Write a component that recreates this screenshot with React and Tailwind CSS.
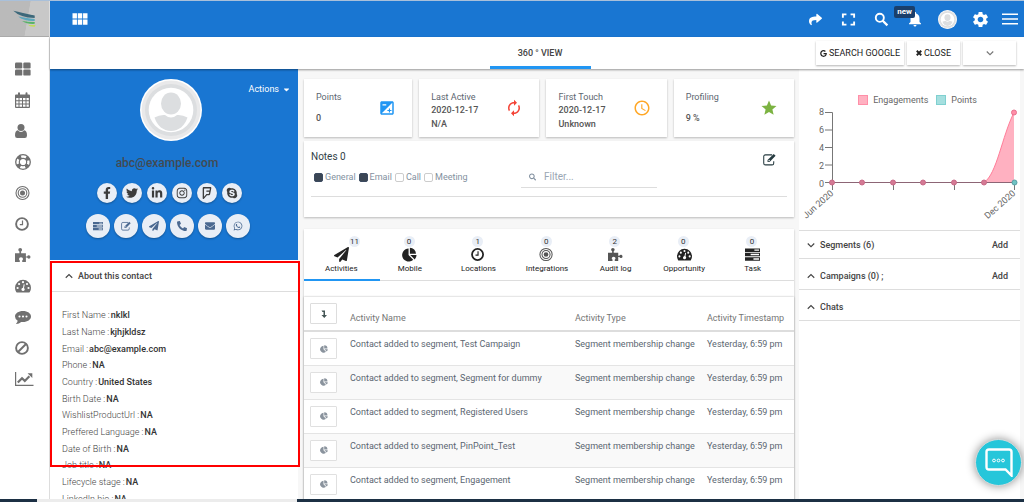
import React from "react";
import { FaFacebookF, FaTwitter, FaLinkedinIn, FaInstagram, FaFoursquare, FaSkype, FaWhatsapp, FaPaperPlane, FaPhoneAlt, FaEnvelope, FaShare, FaGoogle, FaSearch, FaCaretDown } from "react-icons/fa";
import { MdViewModule, MdNotifications, MdSettings, MdExposure, MdAutorenew, MdAccessTime, MdGrade } from "react-icons/md";

const Svg = ({ children, className = "size-4", box = "0 0 16 16" }) => (
  <svg viewBox={box} className={className} fill="currentColor" aria-hidden="true">{children}</svg>
);

const ThLarge = (p) => (
  <Svg {...p}>
    <rect x="0" y="1.5" width="7.3" height="6" rx="1.2" />
    <rect x="8.3" y="1.5" width="7.3" height="6" rx="1.2" />
    <rect x="0" y="8.6" width="7.3" height="6" rx="1.2" />
    <rect x="8.3" y="8.6" width="7.3" height="6" rx="1.2" />
  </Svg>
);
const Calendar = (p) => (
  <Svg {...p}>
    <path fillRule="evenodd" d="M1 2.5h2V1.3Q3 .2 4 .2t1 1.1v1.2h5.500V1.300Q10.500.2 11.500.2t1 1.100V2.500H14q1 0 1 1V15q0 1-1 1H1q-1 0-1-1V3.500q0-1 1-1zM1.200 6v2.300h2.300V6zm3.300 0v2.300h2.500V6zM8 6v2.300h2.500V6zm3.500 0v2.300h2.300V6zM1.200 9.200v2.400h2.300V9.200zm3.300 0v2.400h2.500V9.200zm3.500 0v2.400h2.500V9.200zm3.500 0v2.400h2.300V9.200zM1.200 12.500v2.300h2.300v-2.300zm3.300 0v2.300h2.500v-2.300zm3.500 0v2.300h2.500v-2.300zm3.500 0v2.300h2.300v-2.300z" />
  </Svg>
);
const Person = (p) => (
  <Svg {...p}>
    <circle cx="6" cy="4.600" r="3.500" />
    <path d="M2.800 7.300Q4 8.900 6 8.900t3.200-1.600Q12 7.800 12 12.500 12 15 9.800 15H2.200Q0 15 0 12.500 0 7.800 2.800 7.300z" />
  </Svg>
);
const LifeRing = (p) => (
  <Svg {...p}>
    <g fill="none" stroke="currentColor">
      <circle cx="8" cy="8" r="7.300" strokeWidth="1.300" />
      <circle cx="8" cy="8" r="3.700" strokeWidth="1.200" />
      <circle cx="8" cy="8" r="5.500" strokeWidth="3.800" strokeDasharray="3.600 5.040" strokeDashoffset="-2.520" />
    </g>
  </Svg>
);
const Bullseye = (p) => (
  <Svg {...p}>
    <g fill="none" stroke="currentColor" strokeWidth="1.100">
      <circle cx="7.500" cy="8" r="6.500" />
      <circle cx="7.500" cy="8" r="4.300" />
    </g>
    <circle cx="7.500" cy="8" r="2.500" />
  </Svg>
);
const Clock = (p) => (
  <Svg {...p}>
    <circle cx="7" cy="8" r="5.900" fill="none" stroke="currentColor" strokeWidth="1.900" />
    <path d="M7.500 4.500v4.200H4.800" fill="none" stroke="currentColor" strokeWidth="1.200" />
  </Svg>
);
const Puzzle = (p) => (
  <Svg {...p}>
    <path d="M0 6.200h4.400V4.600Q3.300 3.800 3.300 2.700 3.300 1 5.200 1t1.900 1.700q0 1.100-1 1.900v1.600h4.800v3.200h1.200q.5-1.100 1.700-1.100Q15.500 8.300 15.500 10t-1.700 1.700q-1.200 0-1.700-1.100h-1.200V15H7.200v-1.600q.8-.6.800-1.500Q8 10.300 6 10.300t-2 1.600q0 .9.800 1.500V15H0z" />
  </Svg>
);
const Gauge = (p) => (
  <Svg {...p}>
    <path d="M8 1.800a8 8 0 0 1 8 8q0 2.500-1.200 4.300-.2.300-.6.300H1.800q-.4 0-.6-.3Q0 12.300 0 9.800a8 8 0 0 1 8-8z" />
    <g className="fill-white">
      <circle cx="2.600" cy="10" r="1.100" /><circle cx="4.100" cy="6" r="1.100" /><circle cx="8" cy="4.200" r="1.100" />
      <circle cx="12" cy="6" r="1.100" /><circle cx="13.500" cy="10" r="1.100" />
      <path d="M8.700 6.200l1 .2-.7 3.500q1 .8.700 1.900-.5 1.500-2 1.300-1.600-.5-1.300-2 .4-1.200 1.600-1.400z" />
    </g>
  </Svg>
);
const Comment = (p) => (
  <Svg {...p}>
    <path d="M8 2c4.500 0 8 2.400 8 5.500S12.500 13 8 13q-1 0-1.800-.1Q4 14.900 1.400 15q-.5-.1-.2-.5 1.200-1.200 1.500-2.800Q0 10.200 0 7.500C0 4.400 3.500 2 8 2z" />
    <g className="fill-white"><circle cx="4.500" cy="7.500" r="1.050" /><circle cx="8" cy="7.500" r="1.050" /><circle cx="11.500" cy="7.500" r="1.050" /></g>
  </Svg>
);
const Ban = (p) => (
  <Svg {...p}>
    <circle cx="7" cy="8" r="5.900" fill="none" stroke="currentColor" strokeWidth="1.900" />
    <path d="M3 12l8-8" stroke="currentColor" strokeWidth="1.900" />
  </Svg>
);
const LineChart = (p) => (
  <Svg {...p} box="0 0 19 16">
    <path d="M0 1h1.200v12.800H18.500V15H0z" />
    <path d="M2.800 11.500l4.200-4.300 2.800 2.700 4.600-4.700" fill="none" stroke="currentColor" strokeWidth="2.200" />
    <path d="M12.600 2.300h4.700V7z" />
  </Svg>
);
const Tasks = (p) => (
  <Svg {...p}>
    <path fillRule="evenodd" d="M0 1.500h16v3.700H0zm10 1.100v1.500h5V2.600zM0 6.200h16v3.700H0zm6 1.100v1.500h9V7.300zM0 10.900h16v3.700H0zm9 1.100v1.500h6V12z" />
  </Svg>
);
const Pie = (p) => (
  <Svg {...p}>
    <path d="M7 1.700v6.900l4.900 4.900A6.900 6.900 0 1 1 7 1.700z" />
    <path d="M8.400.7a6.500 6.500 0 0 1 6.500 6.500H8.400zM8.800 8.500h6.700q0 2.700-1.900 4.700z" />
  </Svg>
);
const Edit = (p) => (
  <Svg {...p}>
    <path d="M11.300 2.300H3Q.9 2.300.9 4.400v8.100q0 2.100 2.100 2.100h8.100q2.100 0 2.100-2.100v-2.300" fill="none" stroke="currentColor" strokeWidth="1.300" />
    <path fillRule="evenodd" d="M13.200 1.200l2.300 2.300-7.400 7.600H5.600V8.700zM6.700 9.100v1h1.200l.7-.8-1.100-1.100z" />
  </Svg>
);
const Fullscreen = (p) => (
  <Svg {...p}>
    <path d="M2 6V2.500h3.800M10.200 2.500H14V6M14 10v3.500h-3.800M5.800 13.500H2V10" fill="none" stroke="currentColor" strokeWidth="2" />
  </Svg>
);
const Magnifier = (p) => (
  <Svg {...p}>
    <circle cx="6.200" cy="6.200" r="4.300" fill="none" stroke="currentColor" strokeWidth="2" />
    <path d="M9.300 9.300l5 5" stroke="currentColor" strokeWidth="2.400" />
  </Svg>
);
const Chevron = ({ up }) => (
  <Svg className="size-2 shrink-0">
    <path d={up ? "M1.500 11.500L8 5l6.500 6.500" : "M1.500 5L8 11.500 14.500 5"} fill="none" stroke="currentColor" strokeWidth="2.200" />
  </Svg>
);
const Avatar = ({ className }) => (
  <svg viewBox="0 0 62 62" className={className} role="img" aria-label="Contact">
    <circle cx="31" cy="31" r="31" fill="#fff" />
    <circle cx="31" cy="31" r="29.500" fill="#e9e9ea" />
    <circle cx="31" cy="31" r="26" fill="#dcdee0" />
    <circle cx="31" cy="31" r="22.300" fill="#fff" />
    <ellipse cx="31" cy="24.500" rx="10" ry="11" fill="#dcdee0" />
    <path d="M14.500 38.500q5-3 10.500-2.500 6 5 12 0 5.500-.5 10.500 2.500Q43 51.500 31 52 19 51.500 14.500 38.500z" fill="#dcdee0" />
  </svg>
);

const nav = [
  ["Dashboard", ThLarge], ["Calendar", Calendar], ["Contacts", Person], ["Support", LifeRing],
  ["Segments", Bullseye], ["History", Clock], ["Plugins", Puzzle], ["Performance", Gauge],
  ["Messages", Comment], ["Blocked", Ban], ["Reports", LineChart],
];
const socials = [
  ["Facebook", FaFacebookF], ["Twitter", FaTwitter], ["LinkedIn", FaLinkedinIn],
  ["Instagram", FaInstagram], ["Foursquare", FaFoursquare], ["Skype", FaSkype],
];
const actions = [
  ["Tasks", Tasks], ["Edit", Edit], ["Send", FaPaperPlane], ["Call", FaPhoneAlt], ["Mail", FaEnvelope], ["WhatsApp", FaWhatsapp],
];
const fields = [
  ["First Name", "nklkl"], ["Last Name", "kjhjkldsz"], ["Email", "abc@example.com"], ["Phone", "NA"],
  ["Country", "United States"], ["Birth Date", "NA"], ["WishlistProductUrl", "NA"], ["Preffered Language", "NA"],
  ["Date of Birth", "NA"], ["Job title", "NA"], ["Lifecycle stage", "NA"], ["LinkedIn bio", "NA"],
];
const stats = [
  { label: "Points", lines: ["0"], Icon: MdExposure, color: "text-[#2196f3]" },
  { label: "Last Active", lines: ["2020-12-17", "N/A"], Icon: MdAutorenew, color: "text-[#f44336]" },
  { label: "First Touch", lines: ["2020-12-17", "Unknown"], Icon: MdAccessTime, color: "text-[#ffa726]" },
  { label: "Profiling", lines: ["9 %"], Icon: MdGrade, color: "text-[#7cb342]" },
];
const tabs = [
  ["Activities", 11, FaPaperPlane], ["Mobile", 0, Pie], ["Locations", 1, Clock], ["Integrations", 0, Bullseye],
  ["Audit log", 2, Puzzle], ["Opportunity", 0, Gauge], ["Task", 0, Tasks],
];
const rows = ["Test Campaign", "Segment for dummy", "Registered Users", "PinPoint_Test", "Engagement"];
const card = "bg-white shadow-[0_1px_2px_rgba(0,0,0,0.25)]";

function Chart() {
  const xs = [33, 63, 94, 124, 155, 185, 215];
  return (
    <svg viewBox="0 0 221 124" className="block w-full overflow-visible font-[Roboto,sans-serif]" role="img" aria-label="Engagements and points, June to December 2020">
      <g stroke="#777" strokeWidth="1" fill="none">
        <path d="M33.500 6.500V77M26 6.500h7.500M26 24h7.500M26 41.500h7.500M26 59h7.500M26 76.500h7.500M33.500 77v7M94.500 77v7M155.500 77v7M215.500 77v7" />
      </g>
      <path d="M185 76.500C198 68 203 30 215 6.500V76.500z" fill="#ffb1c1" />
      <path d="M185 76.500C198 68 203 30 215 6.500" fill="none" stroke="#ff7d99" strokeWidth="1" />
      <path d="M33 76.500H215" stroke="#8c6575" strokeWidth="1" />
      {xs.slice(0, 6).map((x) => <circle key={x} cx={x} cy="76.500" r="2.500" fill="#d47a94" stroke="#c96a88" />)}
      <circle cx="215" cy="6.500" r="2.500" fill="#ff8fa8" stroke="#e8718f" />
      <circle cx="215.500" cy="76.500" r="2.500" fill="#6fc4c4" stroke="#5a9fa5" />
      <g fontSize="9" fill="#666" textAnchor="end">
        {[8, 6, 4, 2, 0].map((n, i) => <text key={n} x="25" y={9 + i * 18}>{n}</text>)}
        <text transform="translate(35 88) rotate(-42)">Jun 2020</text>
        <text transform="translate(217 88) rotate(-42)">Dec 2020</text>
      </g>
    </svg>
  );
}

export default function App() {
  return (
    <div className="flex h-screen flex-col overflow-hidden bg-[#f7f7f7] font-[Roboto,sans-serif] text-[9px] leading-3 text-[#444]">
      <div className="h-px shrink-0 bg-[#a9c0da]" />
      <div className="flex min-h-0 flex-1">
        <aside className="flex w-[50px] shrink-0 flex-col border-r border-[#ddd] bg-white">
          <a href="#home" aria-label="Home" className="block h-9 border-b border-[#aaa] bg-linear-100 from-[#bababa] from-55% to-[#c8c8c8] to-56%">
            <svg viewBox="0 0 49 36" className="h-full w-full" aria-hidden="true">
              <path d="M13 10q9 2 22 5v2.500Q20 17 13 10z" fill="#3c687a" />
              <path d="M18 16q9 2 17 2.500v2q-11 .5-17-4.500z" fill="#5ca7bd" />
              <path d="M22 20.500q6 1 13 1v2q-8 .5-13-3z" fill="#58b368" />
              <path d="M28 24.500q4 .5 8 0l-1 2q-5 .5-7-2z" fill="#c3dc5c" />
            </svg>
          </a>
          <nav className="flex flex-col pt-4 text-[#707070]">
            {nav.map(([name, Icon]) => (
              <a key={name} href={"#" + name.toLowerCase()} aria-label={name} className="flex h-[31px] items-center pl-[15px]">
                <Icon className={name === "Reports" ? "h-4 w-[19px]" : "size-4"} />
              </a>
            ))}
          </nav>
        </aside>

        <div className="flex min-w-0 flex-1 flex-col">
          <header className="flex h-9 shrink-0 items-center bg-[#1976d2] text-white">
            <button aria-label="Apps" className="ml-5"><MdViewModule size={20} /></button>
            <div className="mr-px ml-auto flex items-center">
              <button aria-label="Share" className="flex w-[33px] justify-center"><FaShare size={13} /></button>
              <button aria-label="Full screen" className="flex w-[33px] justify-center"><Fullscreen className="size-[15px]" /></button>
              <button aria-label="Search" className="flex w-[33px] justify-center"><Magnifier className="size-[15px]" /></button>
              <button aria-label="Notifications" className="relative flex w-[33px] justify-center">
                <MdNotifications size={18} />
                <span className="absolute -top-1 right-4 rounded-xs bg-[#1a3f6b] px-[3px] text-[8px] font-bold">new</span>
              </button>
              <button aria-label="Account" className="flex w-[33px] justify-center"><Avatar className="size-[19px]" /></button>
              <button aria-label="Settings" className="flex w-[33px] justify-center"><MdSettings size={19} /></button>
              <button aria-label="Menu" className="flex w-[26px] justify-center">
                <Svg><path d="M0 2.500h16v1.500H0zM0 7.300h16v1.500H0zM0 12.100h16v1.500H0z" /></Svg>
              </button>
            </div>
          </header>

          <div className="relative z-10 grid h-8 shrink-0 grid-cols-[1fr_auto_1fr] bg-white pl-[6px] shadow-[0_1px_2px_rgba(0,0,0,0.4)]">
            <span />
            <a href="#view" className="mt-auto flex h-[31px] w-[101px] items-center justify-center border-b-3 border-[#2196f3] pt-px font-medium">360 ° VIEW</a>
            <div className="flex items-center justify-end gap-[3px] pt-1 pr-2 pb-1">
              <button className="flex h-6 w-[88px] items-center justify-center gap-[2px] bg-white whitespace-nowrap text-[#222] shadow-[0_1px_2px_rgba(0,0,0,0.3)]"><FaGoogle size={7} /> SEARCH GOOGLE</button>
              <button className="flex h-6 w-[53px] items-center justify-center gap-[2px] bg-white text-[#222] shadow-[0_1px_2px_rgba(0,0,0,0.3)]">
                <Svg className="size-[6px]"><path d="M2 2l12 12M14 2L2 14" stroke="currentColor" strokeWidth="5" /></Svg> CLOSE
              </button>
              <button aria-label="More" className="flex h-6 w-[53px] items-center justify-center bg-white text-[#777] shadow-[0_1px_2px_rgba(0,0,0,0.3)]"><Chevron /></button>
            </div>
          </div>

          <main className="flex min-h-0 flex-1 gap-[6px] pr-1">
            <section className="relative w-[248px] shrink-0 bg-white">
              <div className="flex h-[191px] flex-col items-center bg-[#1976d2] pt-[10px]">
                <div className="grid w-full grid-cols-[1fr_auto_1fr] pr-[7px]">
                  <span />
                  <Avatar className="size-[62px]" />
                  <button className="mt-1 flex items-center gap-[3px] self-start justify-self-end text-white">Actions <FaCaretDown size={9} /></button>
                </div>
                <h1 className="mt-[14px] pr-[14px] text-[12px] leading-4 font-medium text-[#424a52]">abc@example.com</h1>
                <div className="mt-3 flex gap-[5px] pr-[10px]">
                  {socials.map(([n, Icon]) => (
                    <a key={n} href={"#" + n.toLowerCase()} aria-label={n} className="flex size-5 items-center justify-center rounded-full bg-[#e9eef6] text-[#3c3c3c] shadow-[0_1px_2px_rgba(0,0,0,0.3)]"><Icon size={12} /></a>
                  ))}
                </div>
                <div className="mt-[11px] flex gap-1 pr-[13px]">
                  {actions.map(([n, Icon]) => (
                    <button key={n} aria-label={n} className="flex size-6 items-center justify-center rounded-full bg-[#e9eef6] text-[#4a6890] shadow-[0_1px_2px_rgba(0,0,0,0.3)]"><Icon className="size-[10px]" /></button>
                  ))}
                </div>
              </div>
              <button className="flex h-8 w-full items-center gap-[5px] border-b border-[#ddd] pl-[15px] font-medium"><Chevron up />About this contact</button>
              <dl className="mt-[15px] grid h-[200px] auto-rows-fr pl-3">
                {fields.map(([k, v]) => (
                  <div key={k} className="flex items-center gap-px">
                    <dt className="font-light">{k} :</dt><dd className="font-medium text-[#333]">{v}</dd>
                  </div>
                ))}
              </dl>
              <div className="pointer-events-none absolute top-[192px] left-0 h-[206px] w-[250px] border-2 border-[#ff0000]" />
            </section>

            <section className="flex min-w-0 flex-1 flex-col pt-[10px]">
              <div className="grid grid-cols-[108fr_120fr_120fr_120fr] gap-[7px]">
                {stats.map(({ label, lines, Icon, color }) => (
                  <div key={label} className={`${card} flex h-[58px] items-center justify-between pr-[17px] pl-3`}>
                    <div className={lines.length === 1 ? "flex flex-col gap-[8px]" : "flex flex-col pt-[5px]"}>
                      <span className="text-[#5c6670]">{label}</span>
                      {lines.map((l) => <span key={l} className="leading-[14px] font-medium text-[#555]">{l}</span>)}
                    </div>
                    <Icon size={18} className={`${color} -mr-px`} />
                  </div>
                ))}
              </div>

              <div className={`${card} mt-1 h-[76px] px-[7px] pt-[7px]`}>
                <div className="flex items-center justify-between pr-[11px]">
                  <h2 className="text-[10px] leading-3 text-[#333f48]">Notes 0</h2>
                  <button aria-label="New note" className="mt-[5px] text-[#263b40]"><Edit className="size-[13px]" /></button>
                </div>
                <div className="mt-px flex h-5 items-center pl-[3px] text-[#8391a0]">
                  <div className="flex w-[207px] gap-[3px]">
                    {[["General", true], ["Email", true], ["Call", false], ["Meeting", false]].map(([n, on]) => (
                      <label key={n} className="flex items-center gap-[2px]">
                        <input type="checkbox" defaultChecked={on} className="size-[9px] appearance-none rounded-xs border border-[#ccc] bg-white checked:border-[#3b4a60] checked:bg-[#3b4654]" />{n}
                      </label>
                    ))}
                  </div>
                  <label className="flex h-[22px] w-[136px] items-center gap-2 border-b border-[#ddd] pl-2">
                    <FaSearch size={8} />
                    <input aria-label="Filter notes" placeholder="Filter..." className="w-full min-w-0 text-[10px] outline-none placeholder:text-[#9aa6b3]" />
                  </label>
                </div>
                <hr className="mt-[9px] border-[#ddd]" />
              </div>

              <div className={`${card} mt-3 min-h-0 flex-1`}>
                <div className="grid h-[52px] grid-cols-7 border-b border-[#ddd] pr-[7px] pl-[3px]">
                  {tabs.map(([name, n, Icon], i) => (
                    <button key={name} className="relative flex flex-col items-center pt-[18px] text-[#222]">
                      <Icon className={name === "Audit log" || name === "Integrations" ? "size-[15px] text-[#555]" : "size-[15px]"} />
                      <span className="mt-px text-[8px]">{name}</span>
                      <span className={`absolute top-[7px] flex size-[11px] items-center justify-center rounded-full bg-[#e9eef6] text-[8px] leading-none text-[#333] ${i === 0 ? "left-[42px]" : "left-[28px]"}`}>{n}</span>
                      {i === 0 && <span className="absolute -bottom-px -left-[3px] h-[2px] w-[76px] bg-[#2196f3]" />}
                    </button>
                  ))}
                </div>
                <table className="mt-4 w-full border-collapse text-left shadow-[0_0_2px_rgba(0,0,0,0.3)]">
                  <thead>
                    <tr className="h-[34px] border-b-2 border-[#ddd] text-[#757575]">
                      <th className="w-[46px] pl-[6px]"><button aria-label="Sort" className="flex h-[21px] w-[27px] items-center justify-center rounded-[1px] border border-[#ddd] text-[#455]">
                        <Svg className="size-2"><path d="M3 1h7v9h4l-5.500 6L3 10h4V4H5z" /></Svg></button></th>
                      <th className="pt-[8px] font-normal">Activity Name</th>
                      <th className="w-[132px] pt-[8px] font-normal">Activity Type</th>
                      <th className="w-[87px] pt-[8px] font-normal">Activity Timestamp</th>
                    </tr>
                  </thead>
                  <tbody>
                    {rows.map((r) => (
                      <tr key={r} className="h-[34px] border-b border-[#e4e4e4] align-top text-[#5b6671] even:bg-[#f9f9f9]">
                        <td className="pt-[6px] pl-[6px]"><button aria-label={"Details for " + r} className="flex h-[21px] w-[27px] items-center justify-center rounded-[1px] border border-[#e0e0e0] bg-white text-[#8a939d]"><Pie className="size-2" /></button></td>
                        <td className="pt-[6px]">Contact added to segment, {r}</td>
                        <td className="pt-[6px]">Segment membership change</td>
                        <td className="pt-[6px]">Yesterday, 6:59 pm</td>
                      </tr>
                    ))}
                  </tbody>
                </table>
              </div>
            </section>

            <section className="-ml-px w-[221px] shrink-0 bg-white">
              <div className="flex h-[37px] items-end justify-center gap-2 pl-[16px] text-[9px] text-[#666]">
                <span className="flex items-center gap-[5px]"><i className="size-[10px] border border-[#ff8fa8] bg-[#ffb1c1]" />Engagements</span>
                <span className="flex items-center gap-[5px]"><i className="size-[10px] border border-[#7fd0d0] bg-[#a5dfdf]" />Points</span>
              </div>
              <Chart />
              {[["Segments (6)", false, true], ["Campaigns (0) ;", true, true], ["Chats", true, false]].map(([t, up, add], i) => (
                <div key={t} className={`flex items-center border-b border-[#ddd] pr-3 pl-2 font-medium ${i === 0 ? "h-[29px] border-t" : "h-[31px] pt-[3px]"}`}>
                  <button className="flex items-center gap-[5px]"><Chevron up={up} />{t}</button>
                  {add && <button className="ml-auto">Add</button>}
                </div>
              ))}
            </section>
          </main>
        </div>
      </div>
      <footer className="relative z-10 flex h-[3px] shrink-0 bg-[#1c3044] pl-[37px]"><div className="w-[260px] bg-[#ececec]" /></footer>
      <button aria-label="Open chat" className="fixed right-[2px] bottom-4 z-20 flex size-[47px] items-center justify-center rounded-full border border-[#d5dadb] bg-[#26c6da] text-white shadow-[0_0_10px_rgba(0,0,0,0.45)]">
        <svg viewBox="0 0 28 29" className="h-[29px] w-7" fill="none" stroke="currentColor" aria-hidden="true">
          <path d="M4 1.500h20q2.500 0 2.500 2.500v23.500l-6-6H4Q1.500 21.500 1.500 19V4Q1.500 1.500 4 1.500z" strokeWidth="2.400" />
          <circle cx="9" cy="12.500" r="1.400" /><circle cx="13.500" cy="12.500" r="1.400" /><circle cx="18" cy="12.500" r="1.400" />
        </svg>
      </button>
    </div>
  );
}
